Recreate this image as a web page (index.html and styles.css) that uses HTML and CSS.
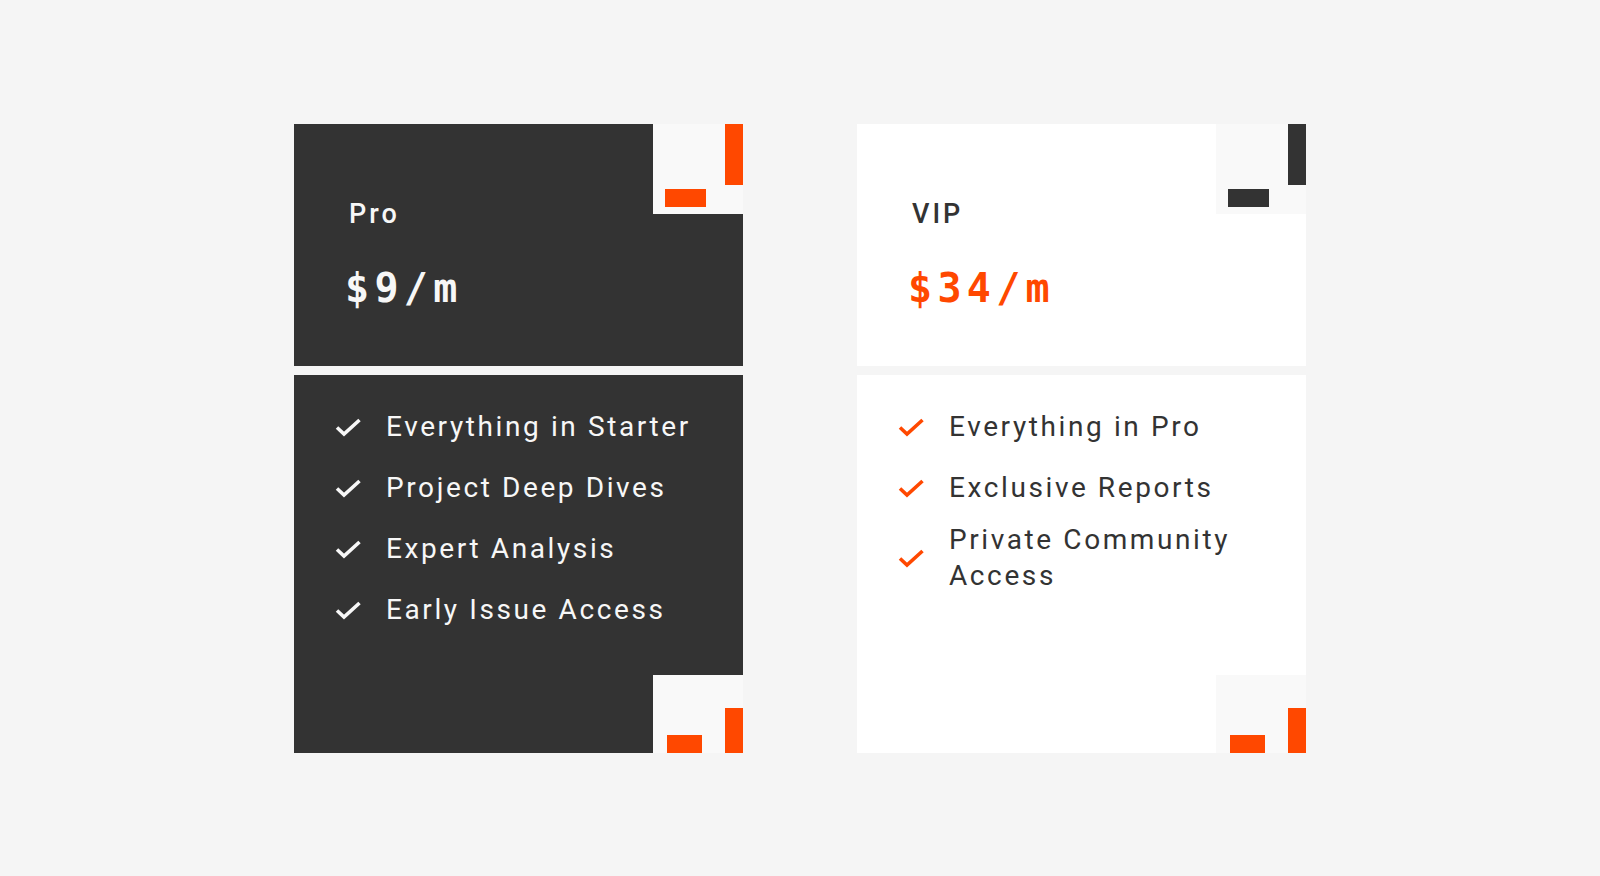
FILE: index.html
```html
<!DOCTYPE html>
<html lang="en">
<head>
<meta charset="utf-8">
<title>Plans</title>
<link rel="stylesheet" href="styles.css">
</head>
<body>
<main class="plans">
  <section class="card card-dark">
    <div class="card-top">
      <div class="corner corner-top"><span class="bar bar-v"></span><span class="bar bar-h"></span></div>
      <h2 class="plan-name">Pro</h2>
      <p class="price">$9/m</p>
    </div>
    <div class="card-bottom">
      <ul class="features">
        <li><svg class="check" viewBox="0 0 26 20"><polyline points="2,10.5 9,17 24.5,3"/></svg><span>Everything in Starter</span></li>
        <li><svg class="check" viewBox="0 0 26 20"><polyline points="2,10.5 9,17 24.5,3"/></svg><span>Project Deep Dives</span></li>
        <li><svg class="check" viewBox="0 0 26 20"><polyline points="2,10.5 9,17 24.5,3"/></svg><span>Expert Analysis</span></li>
        <li><svg class="check" viewBox="0 0 26 20"><polyline points="2,10.5 9,17 24.5,3"/></svg><span>Early Issue Access</span></li>
      </ul>
      <div class="corner corner-bottom"><span class="bar bar-h"></span><span class="bar bar-v"></span></div>
    </div>
  </section>
  <section class="card card-light">
    <div class="card-top">
      <div class="corner corner-top"><span class="bar bar-v"></span><span class="bar bar-h"></span></div>
      <h2 class="plan-name">VIP</h2>
      <p class="price">$34/m</p>
    </div>
    <div class="card-bottom">
      <ul class="features">
        <li><svg class="check" viewBox="0 0 26 20"><polyline points="2,10.5 9,17 24.5,3"/></svg><span>Everything in Pro</span></li>
        <li><svg class="check" viewBox="0 0 26 20"><polyline points="2,10.5 9,17 24.5,3"/></svg><span>Exclusive Reports</span></li>
        <li><svg class="check" viewBox="0 0 26 20"><polyline points="2,10.5 9,17 24.5,3"/></svg><span>Private Community Access</span></li>
      </ul>
      <div class="corner corner-bottom"><span class="bar bar-h"></span><span class="bar bar-v"></span></div>
    </div>
  </section>
</main>
</body>
</html>
```
FILE: styles.css
```css
* { box-sizing: border-box; }
html, body { margin: 0; padding: 0; }
body {
  background: #f5f5f5;
  height: 100vh;
  display: flex;
  align-items: center;
  justify-content: center;
  font-family: "Roboto", "Liberation Sans", sans-serif;
}
.plans {
  display: flex;
  gap: 114px;
}
.card {
  width: 449px;
  display: flex;
  flex-direction: column;
  gap: 9px;
}
.card-top {
  position: relative;
  height: 242px;
  padding: 72px 55px 0;
}
.card-bottom {
  position: relative;
  height: 378px;
  padding: 25px 41px 0;
}
.card-dark .card-top, .card-dark .card-bottom { background: #333333; color: #f7f7f7; }
.card-light .card-top, .card-light .card-bottom { background: #ffffff; color: #333333; }

.plan-name {
  margin: 0;
  font-size: 27px;
  line-height: 36px;
  font-weight: 500;
  letter-spacing: 3px;
}
.price {
  margin: 34px 0 0 -4px;
  font-family: "DejaVu Sans Mono", monospace;
  font-weight: bold;
  font-size: 40px;
  line-height: 44px;
  letter-spacing: 5.3px;
}
.card-light .price { color: #ff4800; }

.features {
  list-style: none;
  margin: 0;
  padding: 0;
  display: flex;
  flex-direction: column;
  gap: 7px;
}
.features li {
  display: flex;
  align-items: center;
  gap: 25px;
  min-height: 54px;
  font-size: 28px;
  line-height: 36px;
  letter-spacing: 2.6px;
}
.check {
  width: 26px;
  height: 20px;
  flex: none;
  fill: none;
  stroke-width: 3.6;
  stroke-linecap: butt;
  stroke-linejoin: miter;
}
.card-dark .check { stroke: #f7f7f7; }
.card-light .check { stroke: #ff4800; }

.corner {
  position: absolute;
  right: 0;
  width: 90px;
  background: #f9f9f9;
}
.corner-top { top: 0; height: 90px; }
.corner-bottom { bottom: 0; height: 78px; }
.bar { position: absolute; display: block; }
.corner-top .bar-v { right: 0; top: 0; width: 18px; height: 61px; }
.corner-top .bar-h { left: 12px; top: 65px; width: 41px; height: 18px; }
.corner-bottom .bar-v { right: 0; bottom: 0; width: 18px; height: 45px; }
.corner-bottom .bar-h { left: 14px; bottom: 0; width: 35px; height: 18px; }
.card-dark .bar { background: #ff4800; }
.card-light .corner-top .bar { background: #333333; }
.card-light .corner-bottom .bar { background: #ff4800; }
```
